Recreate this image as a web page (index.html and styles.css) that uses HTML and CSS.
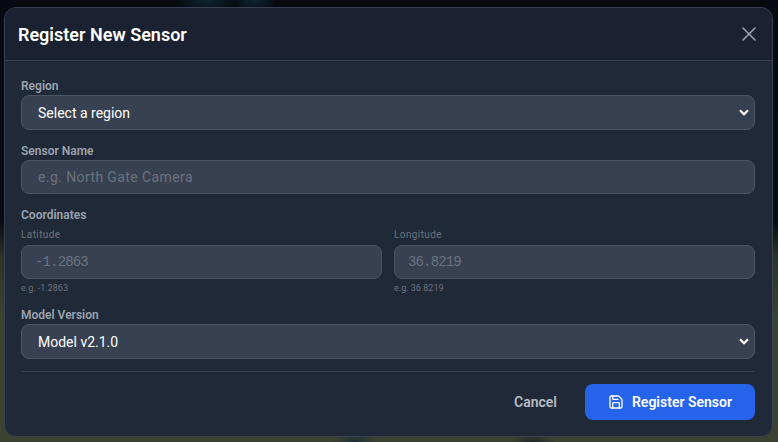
FILE: index.html
```html
<!DOCTYPE html>
<html lang="en">
<head>
    <meta charset="UTF-8">
    <meta name="viewport" content="width=device-width, initial-scale=1.0">
    <title>Register New Sensor</title>
    <link rel="stylesheet" href="styles.css">
</head>
<body>
    <div class="modal">
        <div class="modal-header">
            <h2 class="modal-title">Register New Sensor</h2>
            <button class="close-button" type="button" aria-label="Close">
                <svg width="24" height="24" viewBox="0 0 24 24" fill="none" stroke="currentColor" stroke-width="1.6" stroke-linecap="round" stroke-linejoin="round"><path d="M6 18L18 6M6 6l12 12"/></svg>
            </button>
        </div>

        <form class="modal-body">
            <div class="field">
                <label class="label">Region</label>
                <div class="select">
                    <span>Select a region</span>
                    <svg class="chevron" width="10" height="7" viewBox="0 0 10 7" fill="none" stroke="currentColor" stroke-width="2.2"><path d="M1 1.2l4 4 4-4"/></svg>
                </div>
            </div>

            <div class="field">
                <label class="label">Sensor Name</label>
                <input class="input" type="text" placeholder="e.g. North Gate Camera">
            </div>

            <div class="field">
                <label class="label coords-label">Coordinates</label>
                <div class="coords">
                    <div>
                        <label class="sublabel">Latitude</label>
                        <input class="input mono" type="text" placeholder="-1.2863">
                        <p class="hint">e.g. -1.2863</p>
                    </div>
                    <div>
                        <label class="sublabel">Longitude</label>
                        <input class="input mono" type="text" placeholder="36.8219">
                        <p class="hint">e.g. 36.8219</p>
                    </div>
                </div>
            </div>

            <div class="field">
                <label class="label">Model Version</label>
                <div class="select">
                    <span>Model v2.1.0</span>
                    <svg class="chevron" width="10" height="7" viewBox="0 0 10 7" fill="none" stroke="currentColor" stroke-width="2.2"><path d="M1 1.2l4 4 4-4"/></svg>
                </div>
            </div>

            <div class="actions">
                <button class="cancel-button" type="button">Cancel</button>
                <button class="submit-button" type="button">
                    <svg width="16" height="16" viewBox="0 0 24 24" fill="none" stroke="currentColor" stroke-width="2" stroke-linecap="round" stroke-linejoin="round"><path d="M15.2 3a2 2 0 0 1 1.4.6l3.8 3.8a2 2 0 0 1 .6 1.4V19a2 2 0 0 1-2 2H5a2 2 0 0 1-2-2V5a2 2 0 0 1 2-2z"/><path d="M17 21v-7a1 1 0 0 0-1-1H8a1 1 0 0 0-1 1v7"/><path d="M7 3v4a1 1 0 0 0 1 1h7"/></svg>
                    Register Sensor
                </button>
            </div>
        </form>
    </div>
</body>
</html>
```

FILE: styles.css
```css
* {
    box-sizing: border-box;
}

html, body {
    height: 100%;
}

body {
    margin: 0;
    padding: 7px 5px 5px 4px;
    overflow: hidden;
    font-family: Roboto, sans-serif;
    background:
        radial-gradient(ellipse 30px 14px at 207px 0, #0f2733, transparent),
        radial-gradient(ellipse 22px 14px at 254px 0, #0f2733, transparent),
        radial-gradient(ellipse 22px 10px at 355px 442px, #1c3038, transparent),
        radial-gradient(ellipse 22px 8px at 533px 442px, #20282a, transparent),
        linear-gradient(to bottom, #070a11 0%, #080b12 50%, #2c3228 58%, #3a4230 72%, #3c4230 100%);
}

.modal {
    height: 430px;
    background-color: #1f2937;
    border: 1px solid #374151;
    border-radius: 12px;
    overflow: hidden;
}

.modal-header {
    height: 53px;
    padding: 0 11px 0 13px;
    display: flex;
    align-items: center;
    justify-content: space-between;
    background-color: #1a2130;
    border-bottom: 1px solid #374151;
}

.modal-title {
    margin: 0;
    font-size: 18px;
    font-weight: 600;
    color: #fff;
}

.close-button {
    padding: 0;
    display: flex;
    border: none;
    background: none;
    color: #9ca3af;
}

.modal-body {
    padding: 17px 17px 0 16px;
}

.field {
    margin-bottom: 13px;
}

.label {
    display: block;
    margin-bottom: 1px;
    font-size: 12px;
    line-height: 16px;
    font-weight: 600;
    color: #9ca3af;
}

.coords-label {
    margin-bottom: 3px;
}

.select {
    height: 35px;
    padding: 0 5px 0 16px;
    display: flex;
    align-items: center;
    justify-content: space-between;
    font-size: 14px;
    color: #fff;
    background-color: #374151;
    border: 1px solid #4b5563;
    border-radius: 8px;
}

.chevron {
    color: #fff;
}

.input {
    display: block;
    width: 100%;
    height: 34px;
    padding: 0 16px;
    font-family: inherit;
    font-size: 14px;
    letter-spacing: 0.4px;
    color: #fff;
    background-color: #374151;
    border: 1px solid #4b5563;
    border-radius: 8px;
    outline: none;
}

.input::placeholder {
    color: #6b7280;
    opacity: 1;
}

.input.mono {
    padding: 0 13px;
    font-family: "Liberation Mono", monospace;
    font-size: 14px;
    letter-spacing: -0.85px;
}

.coords {
    display: grid;
    grid-template-columns: 1fr 1fr;
    gap: 12px;
}

.sublabel {
    display: block;
    margin-bottom: 3px;
    padding-top: 1px;
    font-size: 10px;
    line-height: 15px;
    letter-spacing: 0.4px;
    color: #6b7280;
}

.hint {
    margin: 3px 0 0;
    font-size: 9px;
    line-height: 12px;
    color: #6b7280;
}

.actions {
    margin-top: -1px;
    padding-top: 12px;
    display: flex;
    justify-content: flex-end;
    align-items: center;
    gap: 12px;
    border-top: 1px solid #374151;
}

.cancel-button {
    padding: 0 16px;
    height: 36px;
    border: none;
    background: none;
    font-family: inherit;
    font-size: 14px;
    font-weight: 600;
    color: #b6bbc4;
}

.submit-button {
    width: 170px;
    height: 36px;
    display: flex;
    align-items: center;
    justify-content: center;
    gap: 8px;
    border: none;
    border-radius: 8px;
    background-color: #2563eb;
    font-family: inherit;
    font-size: 14px;
    font-weight: 600;
    color: #fff;
}
```
